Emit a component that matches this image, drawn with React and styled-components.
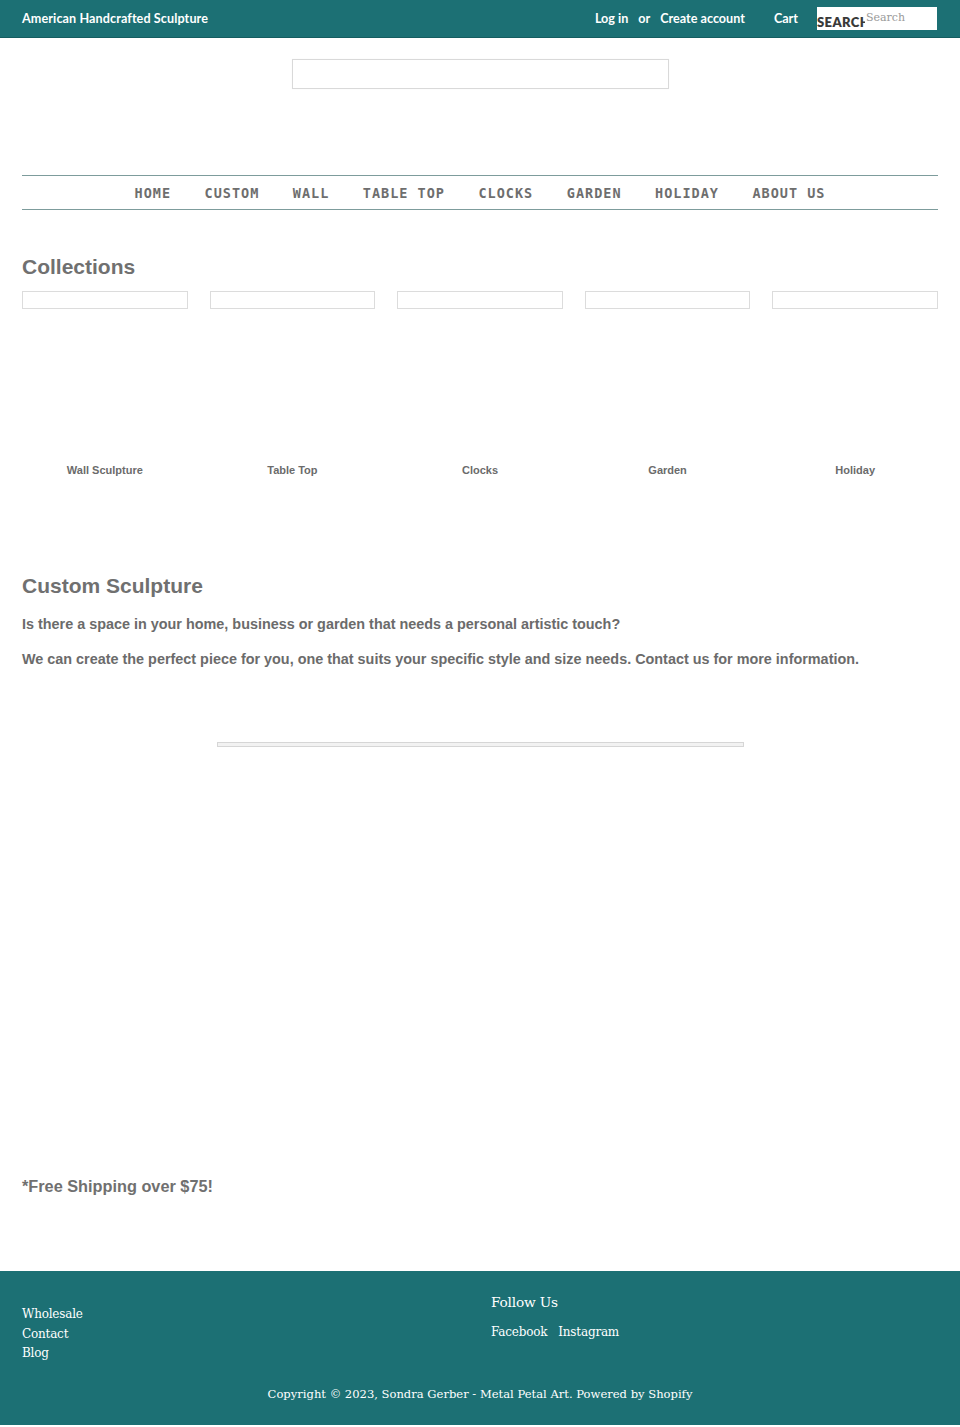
import React from "react";
import styled, { createGlobalStyle } from "styled-components";

const Global = createGlobalStyle`
  html, body { margin: 0; padding: 0; background: #fff; }
  body { font-family: "Liberation Sans", Arial, sans-serif; color: #6b6b6b; }
  * { box-sizing: border-box; }
`;

const TEAL = "#1c7074";

const TopBar = styled.header`
  height: 38px;
  background: ${TEAL};
  border-bottom: 1px solid #155d60;
  display: flex;
  align-items: center;
  justify-content: space-between;
  padding: 0 23px 0 22px;
  color: #fff;
  font-family: "Lato", "DejaVu Sans", sans-serif;
  font-weight: 700;
  font-size: 12.6px;
`;

const Brand = styled.span`
  letter-spacing: 0.1px;
`;

const TopLinks = styled.div`
  display: flex;
  align-items: center;
`;

const Account = styled.span`
  display: flex;
  gap: 10px;
  margin-right: 29px;
`;

const CartLink = styled.span`
  margin-right: 19px;
`;

const SearchForm = styled.form`
  display: flex;
  align-items: flex-end;
  width: 120px;
  height: 23px;
  background: #fff;
  overflow: hidden;
`;

const SearchButton = styled.span`
  color: #3a3a3a;
  font-family: "Lato", "DejaVu Sans", sans-serif;
  font-weight: 800;
  font-size: 13px;
  letter-spacing: 0.4px;
  width: 48px;
  flex: none;
  overflow: hidden;
  white-space: nowrap;
  line-height: 15px;
`;

const SearchInput = styled.span`
  color: #9a9a9a;
  font-family: "DejaVu Serif", serif;
  font-weight: 400;
  font-size: 11px;
  align-self: flex-start;
  padding-top: 4px;
  padding-left: 1px;
`;

const LogoRow = styled.div`
  display: flex;
  justify-content: center;
  padding-top: 21px;
  height: 137px;
`;

const LogoFrame = styled.div`
  width: 377px;
  height: 30px;
  border: 1px solid #d9d9d9;
  box-shadow: 0 0 1px rgba(0, 0, 0, 0.05);
`;

const Nav = styled.nav`
  margin: 0 22px;
  height: 35px;
  border-top: 1px solid #7d9c9c;
  border-bottom: 1px solid #7d9c9c;
  display: flex;
  justify-content: center;
  align-items: center;
  gap: 33.5px;
`;

const NavItem = styled.span`
  font-family: "DejaVu Sans Mono", "Liberation Mono", monospace;
  font-weight: 700;
  font-size: 13.5px;
  letter-spacing: 1px;
  color: #6e6e6e;
`;

const Main = styled.main`
  padding: 0 22px;
`;

const Heading = styled.h2`
  margin: ${(p) => p.$top}px 0 0;
  font-size: 21px;
  font-weight: 700;
  color: #707070;
  line-height: 24px;
`;

const Grid = styled.div`
  display: grid;
  grid-template-columns: repeat(5, 1fr);
  column-gap: 22px;
  margin-top: 12px;
`;

const Card = styled.div`
  display: flex;
  flex-direction: column;
  align-items: center;
`;

const Thumb = styled.div`
  width: 100%;
  height: 18px;
  border: 1px solid #dcdcdc;
`;

const CardLabel = styled.span`
  margin-top: 155px;
  font-size: 11px;
  font-weight: 700;
  color: #6b6b6b;
`;

const Para = styled.p`
  margin: ${(p) => p.$top}px 0 0;
  font-size: 14.4px;
  font-weight: 700;
  color: #6b6b6b;
  line-height: 18px;
`;

const Divider = styled.div`
  width: 527px;
  height: 5px;
  margin: 74px auto 0;
  border: 1px solid #d6d6d6;
  background: #f2f2f2;
`;

const Shipping = styled.p`
  margin: 429px 0 0;
  font-size: 16.3px;
  font-weight: 700;
  color: #707070;
  line-height: 20px;
`;

const Footer = styled.footer`
  margin-top: 75px;
  background: ${TEAL};
  height: 155px;
  padding: 22px 22px 0;
  color: #fff;
  font-family: "DejaVu Serif", "Liberation Serif", serif;
  border-bottom: 1px solid #fff;
`;

const FooterCols = styled.div`
  display: grid;
  grid-template-columns: 469px 1fr;
`;

const LinkList = styled.ul`
  list-style: none;
  margin: 0;
  padding: 14px 0 0;
  display: flex;
  flex-direction: column;
  gap: 4px;
  font-size: 12px;
  line-height: 15.5px;
  letter-spacing: -0.2px;
`;

const FollowTitle = styled.div`
  font-size: 13.7px;
  letter-spacing: -0.2px;
  line-height: 18px;
`;

const Social = styled.div`
  display: flex;
  gap: 11px;
  margin-top: 14px;
  font-size: 12px;
  letter-spacing: -0.2px;
`;

const Copyright = styled.div`
  margin-top: 25px;
  text-align: center;
  font-size: 11.55px;
`;

const navItems = ["HOME", "CUSTOM", "WALL", "TABLE TOP", "CLOCKS", "GARDEN", "HOLIDAY", "ABOUT US"];
const collections = ["Wall Sculpture", "Table Top", "Clocks", "Garden", "Holiday"];

export default function App() {
  return (
    <>
      <Global />
      <TopBar>
        <Brand>American Handcrafted Sculpture</Brand>
        <TopLinks>
          <Account>
            <span>Log in</span>
            <span>or</span>
            <span>Create account</span>
          </Account>
          <CartLink>Cart</CartLink>
          <SearchForm>
            <SearchButton>SEARCH</SearchButton>
            <SearchInput>Search</SearchInput>
          </SearchForm>
        </TopLinks>
      </TopBar>
      <LogoRow>
        <LogoFrame />
      </LogoRow>
      <Nav>
        {navItems.map((n) => (
          <NavItem key={n}>{n}</NavItem>
        ))}
      </Nav>
      <Main>
        <Heading $top={45}>Collections</Heading>
        <Grid>
          {collections.map((c) => (
            <Card key={c}>
              <Thumb />
              <CardLabel>{c}</CardLabel>
            </Card>
          ))}
        </Grid>
        <Heading $top={98}>Custom Sculpture</Heading>
        <Para $top={17}>Is there a space in your home, business or garden that needs a personal artistic touch?</Para>
        <Para $top={17}>
          We can create the perfect piece for you, one that suits your specific style and size needs. Contact us for more information.
        </Para>
        <Divider />
        <Shipping>*Free Shipping over $75!</Shipping>
      </Main>
      <Footer>
        <FooterCols>
          <LinkList>
            <li>Wholesale</li>
            <li>Contact</li>
            <li>Blog</li>
          </LinkList>
          <div>
            <FollowTitle>Follow Us</FollowTitle>
            <Social>
              <span>Facebook</span>
              <span>Instagram</span>
            </Social>
          </div>
        </FooterCols>
        <Copyright>Copyright © 2023, Sondra Gerber - Metal Petal Art. Powered by Shopify</Copyright>
      </Footer>
    </>
  );
}
